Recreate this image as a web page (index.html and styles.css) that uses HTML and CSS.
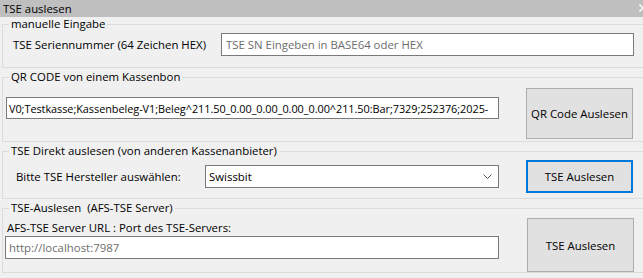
FILE: index.html
```html
<!DOCTYPE html>
<html lang="de">
<head>
<meta charset="utf-8">
<title>TSE auslesen</title>
<link rel="stylesheet" href="styles.css">
</head>
<body>
<div class="window">
  <div class="titlebar">
    <span class="title">TSE auslesen</span>
    <svg class="close" width="8" height="8" viewBox="0 0 8 8"><path d="M0.5 0.5 L7.5 7.5 M7.5 0.5 L0.5 7.5" stroke="#ffffff" stroke-width="1.4"/></svg>
  </div>
  <div class="content">
    <fieldset class="group g1">
      <legend>manuelle Eingabe</legend>
      <div class="row r1">
        <span class="label l1">TSE Seriennummer (64 Zeichen HEX)</span>
        <div class="field f1 placeholder">TSE SN Eingeben in BASE64 oder HEX</div>
      </div>
    </fieldset>
    <fieldset class="group g2">
      <legend>QR CODE von einem Kassenbon</legend>
      <div class="row r2">
        <div class="field f2">V0;Testkasse;Kassenbeleg-V1;Beleg^211.50_0.00_0.00_0.00_0.00^211.50:Bar;7329;252376;2025-</div>
        <div class="button b2">QR Code Auslesen</div>
      </div>
    </fieldset>
    <fieldset class="group g3">
      <legend>TSE Direkt auslesen (von anderen Kassenanbieter)</legend>
      <div class="row r3">
        <span class="label l3">Bitte TSE Hersteller auswählen:</span>
        <div class="field select">
          <span>Swissbit</span>
          <svg class="chev" width="9" height="5" viewBox="0 0 9 5"><path d="M0.5 0.5 L4.5 4.5 L8.5 0.5" fill="none" stroke="#606060" stroke-width="1"/></svg>
        </div>
        <div class="button b3 focused">TSE Auslesen</div>
      </div>
    </fieldset>
    <fieldset class="group g4">
      <legend>TSE-Auslesen&nbsp; (AFS-TSE Server)</legend>
      <div class="row r4">
        <div class="col">
          <span class="label l4">AFS-TSE Server URL : Port des TSE-Servers:</span>
          <div class="field f4 grey">http://localhost:7987</div>
        </div>
        <div class="button b4">TSE Auslesen</div>
      </div>
    </fieldset>
  </div>
</div>
</body>
</html>
```
FILE: styles.css
```css
html, body {
  margin: 0;
  padding: 0;
  background: #f0f0f0;
  overflow: hidden;
}
body {
  width: 643px;
  height: 278px;
  font-family: "Open Sans", "Noto Sans", sans-serif;
  font-size: 11.4px;
  color: #000000;
}
.window {
  display: flex;
  flex-direction: column;
}
.titlebar {
  height: 17px;
  background: #bfbfbf;
  display: flex;
  align-items: center;
  justify-content: space-between;
  padding-left: 3px;
  line-height: 17px;
}
.close {
  margin-right: -4px;
  margin-top: -1px;
}
.content {
  display: flex;
  flex-direction: column;
  gap: 2px;
  padding-left: 2px;
}
.group {
  margin: 0;
  padding: 0;
  border: 1px solid #dcdcdc;
  width: 660px;
  box-sizing: border-box;
}
.group legend {
  padding: 0 2px;
  margin-left: 6px;
  line-height: 14px;
  height: 14px;
}
.row {
  display: flex;
}
.label {
  line-height: 14px;
  white-space: nowrap;
}
.field {
  box-sizing: border-box;
  background: #ffffff;
  border: 1px solid #7a7a7a;
  white-space: nowrap;
  overflow: hidden;
  display: flex;
  align-items: center;
}
.placeholder, .grey {
  color: #6d6d6d;
}
.button {
  box-sizing: border-box;
  background: #e1e1e1;
  border: 1px solid #adadad;
  display: flex;
  align-items: center;
  justify-content: center;
  white-space: nowrap;
}
.button.focused {
  border: 2px solid #0078d7;
}

/* group 1 */
.r1 {
  align-items: center;
  padding: 2px 0 11px 10px;
}
.l1 { width: 208px; }
.f1 {
  width: 413px;
  height: 23px;
  padding-left: 4px;
}

/* group 2 */
.r2 {
  align-items: flex-start;
  padding: 4px 0 2px 3px;
}
.f2 {
  width: 493px;
  height: 22px;
  margin-top: 9px;
  padding-left: 2px;
  font-size: 10.9px;
  letter-spacing: -0.05px;
}
.b2 {
  width: 107px;
  height: 51px;
  margin-left: 27px;
}

/* group 3 */
.r3 {
  align-items: center;
  padding: 2px 0 5px 13px;
}
.l3 { width: 189px; }
.select {
  width: 294px;
  height: 23px;
  padding: 0 4px 0 3px;
  justify-content: space-between;
}
.chev { margin-right: 2px; }
.b3 {
  width: 107px;
  height: 33px;
  margin-left: 27px;
}

/* group 4 */
.r4 {
  align-items: flex-start;
  padding: 0 0 0 2px;
}
.col {
  display: flex;
  flex-direction: column;
}
.l4 {
  margin-top: 6px;
  margin-left: 2px;
}
.f4 {
  width: 494px;
  height: 23px;
  margin-top: 1px;
  padding-left: 3px;
}
.b4 {
  width: 107px;
  height: 54px;
  margin-top: 3px;
  margin-left: 28px;
}
```
